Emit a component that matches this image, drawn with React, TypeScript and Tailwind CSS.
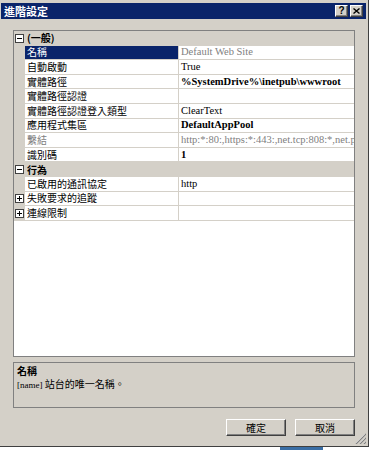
import React from 'react';

type Row =
  | { kind: 'cat'; label: string }
  | {
      kind: 'prop';
      label: string;
      value?: string;
      bold?: boolean;
      gray?: boolean;
      selected?: boolean;
      expand?: boolean;
    };

const rows: Row[] = [
  { kind: 'cat', label: '(一般)' },
  { kind: 'prop', label: '名稱', value: 'Default Web Site', gray: true, selected: true },
  { kind: 'prop', label: '自動啟動', value: 'True' },
  { kind: 'prop', label: '實體路徑', value: '%SystemDrive%\\inetpub\\wwwroot', bold: true },
  { kind: 'prop', label: '實體路徑認證', value: '' },
  { kind: 'prop', label: '實體路徑認證登入類型', value: 'ClearText' },
  { kind: 'prop', label: '應用程式集區', value: 'DefaultAppPool', bold: true },
  { kind: 'prop', label: '繫結', value: 'http:*:80:,https:*:443:,net.tcp:808:*,net.pipe:*', gray: true },
  { kind: 'prop', label: '識別碼', value: '1', bold: true },
  { kind: 'cat', label: '行為' },
  { kind: 'prop', label: '已啟用的通訊協定', value: 'http' },
  { kind: 'prop', label: '失敗要求的追蹤', value: '', expand: true },
  { kind: 'prop', label: '連線限制', value: '', expand: true },
];

const cjk = "font-['Noto_Sans_CJK_TC',sans-serif]";
const serif = "font-['Liberation_Serif','Noto_Sans_CJK_TC',serif]";

const Box = ({ plus }: { plus?: boolean }) => (
  <svg width="9" height="9" viewBox="0 0 9 9">
    <rect x="0.5" y="0.5" width="8" height="8" fill="white" stroke="#404040" />
    <path d="M2 4.5h5" stroke="black" />
    {plus && <path d="M4.5 2v5" stroke="black" />}
  </svg>
);

const Classic = ({ children, className = '' }: { children: React.ReactNode; className?: string }) => (
  <div
    className={`flex items-center justify-center bg-[#d4d0c8] border border-t-white border-l-white border-r-[#404040] border-b-[#404040] shadow-[inset_-1px_-1px_#808080] ${className}`}
  >
    {children}
  </div>
);

const GridRow = ({ row }: { row: Row }) => {
  if (row.kind === 'cat') {
    return (
      <div className="flex h-[14.6px] bg-[#d4d0c8] items-center">
        <div className="w-[11px] flex items-center pl-[1px]">
          <Box />
        </div>
        <div className={`pl-[2px] text-[10px] leading-[14px] font-bold text-black ${cjk}`}>{row.label}</div>
      </div>
    );
  }
  return (
    <div className="flex h-[14.6px]">
      <div className="w-[11px] bg-[#d4d0c8] flex items-center pl-[1px]">{row.expand && <Box plus />}</div>
      <div className="w-[154px] border-r border-b border-[#d4d0c8] flex">
        <div
          className={`flex-1 flex items-center pl-[2px] text-[10px] leading-[14px] whitespace-nowrap ${cjk} ${
            row.selected ? 'bg-[#0a246a] text-white' : row.gray ? 'text-[#808080]' : 'text-black'
          }`}
        >
          {row.label}
        </div>
      </div>
      <div
        className={`flex-1 min-w-0 border-b border-[#d4d0c8] flex items-center pl-[2px] overflow-hidden whitespace-nowrap text-[10.5px] leading-[14px] ${serif} ${
          row.bold ? 'font-bold' : ''
        } ${row.gray ? 'text-[#808080]' : 'text-black'}`}
      >
        {row.value}
      </div>
    </div>
  );
};

export default function App() {
  return (
    <div className="w-[369px] h-[450px] bg-white flex flex-col overflow-hidden">
      <div className="relative h-[447px] bg-[#d4d0c8] border-r border-b border-[#404040] flex flex-col pt-[3px] pl-[1px] pr-[2px]">
        {/* Title bar */}
        <div className="h-[16px] bg-[#0a246a] flex items-center justify-between pl-[3px] pr-[3px]">
          <span className={`text-white font-bold text-[11px] leading-[14px] ${cjk}`}>進階設定</span>
          <div className="flex gap-[2px]">
            <Classic className="w-[13px] h-[12px]">
              <span className="text-[10px] leading-[10px] font-bold font-['Liberation_Sans',sans-serif] text-black">?</span>
            </Classic>
            <Classic className="w-[13px] h-[12px]">
              <svg width="7" height="6" viewBox="0 0 7 6">
                <path d="M0.5 0.5l6 5M6.5 0.5l-6 5" stroke="black" strokeWidth="1.4" />
              </svg>
            </Classic>
          </div>
        </div>

        {/* Body */}
        <div className="flex-1 flex flex-col pl-[12px] pr-[11px] pt-[11px]">
          <div className="h-[327px] bg-white border border-[#808080] flex flex-col">
            {rows.map((r, i) => (
              <GridRow key={i} row={r} />
            ))}
          </div>

          <div className="mt-[5px] h-[46px] border border-[#808080] pl-[3px] pt-[1px] flex flex-col">
            <span className={`text-[10px] leading-[13px] font-bold text-black ${cjk}`}>名稱</span>
            <span className={`text-[10px] leading-[14px] text-black ${cjk}`}>
              <span className={`${serif} text-[9px]`}>[name]</span> 站台的唯一名稱。
            </span>
          </div>

          <div className="mt-[11px] flex justify-end gap-[9px]">
            <Classic className="w-[60px] h-[17px]">
              <span className={`text-[10px] leading-[12px] text-black ${cjk}`}>確定</span>
            </Classic>
            <Classic className="w-[60px] h-[17px]">
              <span className={`text-[10px] leading-[12px] text-black ${cjk}`}>取消</span>
            </Classic>
          </div>
        </div>

        {/* Resize grip */}
        <svg className="absolute right-[2px] bottom-[2px]" width="11" height="11" viewBox="0 0 11 11">
          <path d="M10 1L1 10M10 5L5 10M10 9L9 10" stroke="white" />
          <path d="M11 1L1 11M11 5L5 11M11 9L9 11" stroke="#808080" strokeWidth="1.2" />
        </svg>
      </div>
      <div className="flex h-[3px]">
        <div className="ml-[280px] w-[43px] bg-[#3a6ea5]" />
      </div>
    </div>
  );
}
